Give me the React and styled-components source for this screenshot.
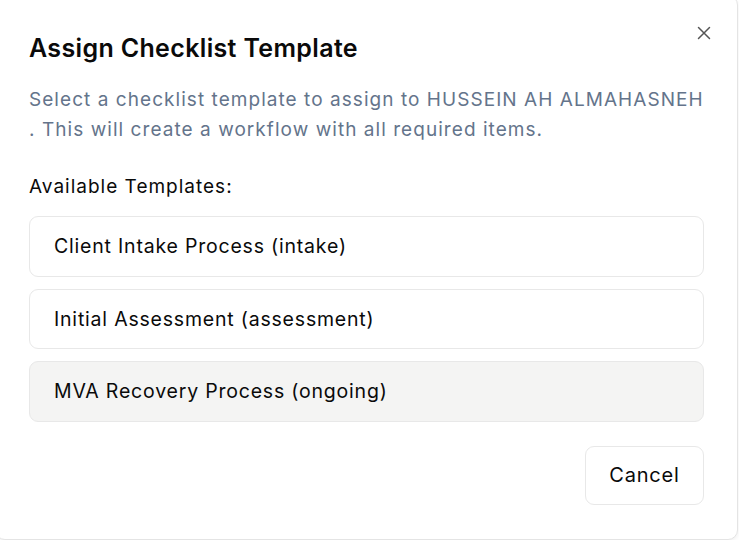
import styled, { createGlobalStyle } from 'styled-components';

const GlobalStyle = createGlobalStyle`
  html, body {
    margin: 0;
    padding: 0;
    background: #ffffff;
    overflow: hidden;
  }
  body {
    font-family: Inter, "Noto Sans", sans-serif;
    color: #0a0a0a;
  }
`;

const Dialog = styled.div`
  position: relative;
  box-sizing: border-box;
  width: 743px;
  height: 545px;
  margin: -5px 0 0 -5px;
  padding: 36px 33px 0 33px;
  background: #ffffff;
  border: 1px solid #e4e4e4;
  border-radius: 10px;
  box-shadow: 0 2px 4px rgba(0, 0, 0, 0.06);
  display: flex;
  flex-direction: column;
`;

const CloseButton = styled.button`
  position: absolute;
  top: 27px;
  right: 23px;
  width: 20px;
  height: 20px;
  padding: 0;
  border: none;
  background: none;
  color: #555555;
  display: flex;
  align-items: center;
  justify-content: center;
`;

const Title = styled.h2`
  margin: 0;
  font-size: 25px;
  font-weight: 600;
  line-height: 32px;
  letter-spacing: 0.35px;
`;

const Description = styled.p`
  margin: 21px 0 0;
  font-size: 19px;
  line-height: 29.5px;
  letter-spacing: 1.05px;
  color: #64748b;
`;

const Label = styled.div`
  margin-top: 29px;
  font-size: 19px;
  line-height: 28px;
  letter-spacing: 1px;
`;

const List = styled.div`
  margin-top: 15px;
  display: flex;
  flex-direction: column;
  gap: 12px;
`;

const Item = styled.div`
  box-sizing: border-box;
  height: 60.5px;
  padding: 0 24px;
  display: flex;
  align-items: center;
  font-size: 19.5px;
  letter-spacing: 0.8px;
  border: 1px solid #e8e8e8;
  border-radius: 9px;
  background: ${(p) => (p.$active ? '#f4f4f3' : '#ffffff')};
`;

const Footer = styled.div`
  margin-top: 24px;
  display: flex;
  justify-content: flex-end;
`;

const CancelButton = styled.button`
  box-sizing: border-box;
  width: 119px;
  height: 59px;
  border: 1px solid #e8e8e8;
  border-radius: 9px;
  background: #ffffff;
  font-family: inherit;
  font-size: 20px;
  letter-spacing: 0.8px;
  color: #0a0a0a;
`;

const templates = [
  'Client Intake Process (intake)',
  'Initial Assessment (assessment)',
  'MVA Recovery Process (ongoing)',
];

export default function App() {
  return (
    <>
      <GlobalStyle />
      <Dialog>
        <CloseButton aria-label="Close">
          <svg width="14" height="14" viewBox="0 0 14 14" fill="none" stroke="currentColor" strokeWidth="1.5" strokeLinecap="round">
            <path d="M1.5 1.5l11 11M12.5 1.5l-11 11" />
          </svg>
        </CloseButton>
        <Title>Assign Checklist Template</Title>
        <Description>
          Select a checklist template to assign to HUSSEIN AH ALMAHASNEH . This will create a workflow with all required items.
        </Description>
        <Label>Available Templates:</Label>
        <List>
          {templates.map((t, i) => (
            <Item key={t} $active={i === 2}>{t}</Item>
          ))}
        </List>
        <Footer>
          <CancelButton>Cancel</CancelButton>
        </Footer>
      </Dialog>
    </>
  );
}
